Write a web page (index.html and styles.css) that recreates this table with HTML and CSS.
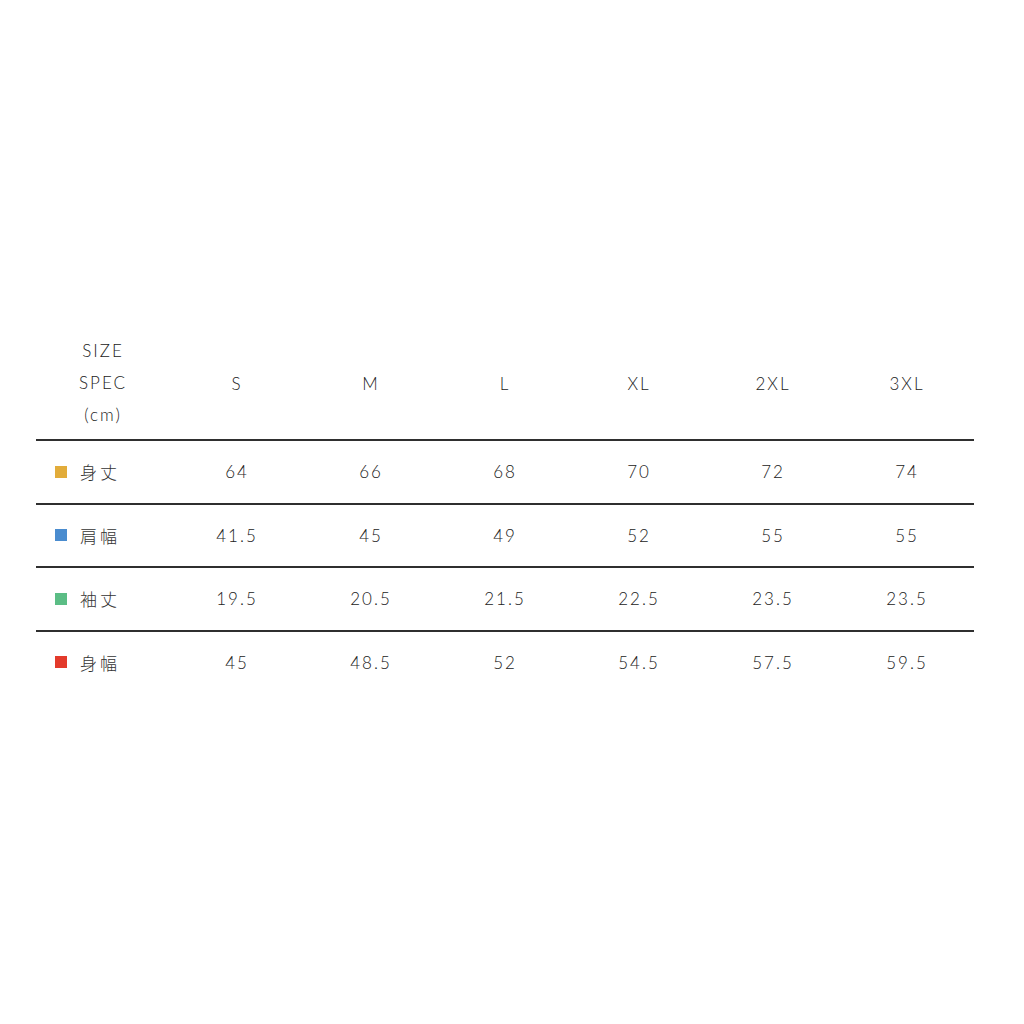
FILE: index.html
```html
<!DOCTYPE html>
<html lang="ja">
<head>
<meta charset="utf-8">
<link rel="stylesheet" href="styles.css">
</head>
<body>
<div class="chart">
  <div class="row head">
    <div class="cell label-head">SIZE<br>SPEC<br>(cm)</div>
    <div class="cell">S</div>
    <div class="cell">M</div>
    <div class="cell">L</div>
    <div class="cell">XL</div>
    <div class="cell">2XL</div>
    <div class="cell">3XL</div>
  </div>
  <div class="row">
    <div class="cell label"><span class="sw sw-yellow"></span>身丈</div>
    <div class="cell">64</div><div class="cell">66</div><div class="cell">68</div><div class="cell">70</div><div class="cell">72</div><div class="cell">74</div>
  </div>
  <div class="row">
    <div class="cell label"><span class="sw sw-blue"></span>肩幅</div>
    <div class="cell">41.5</div><div class="cell">45</div><div class="cell">49</div><div class="cell">52</div><div class="cell">55</div><div class="cell">55</div>
  </div>
  <div class="row">
    <div class="cell label"><span class="sw sw-green"></span>袖丈</div>
    <div class="cell">19.5</div><div class="cell">20.5</div><div class="cell">21.5</div><div class="cell">22.5</div><div class="cell">23.5</div><div class="cell">23.5</div>
  </div>
  <div class="row last">
    <div class="cell label"><span class="sw sw-red"></span>身幅</div>
    <div class="cell">45</div><div class="cell">48.5</div><div class="cell">52</div><div class="cell">54.5</div><div class="cell">57.5</div><div class="cell">59.5</div>
  </div>
</div>
</body>
</html>
```
FILE: styles.css
```css
html, body {
  margin: 0;
  padding: 0;
  background: #ffffff;
}
body {
  padding-top: 335px;
  font-family: Lato, "Noto Sans CJK JP", sans-serif;
  font-weight: 300;
  color: #222222;
  font-size: 17px;
  letter-spacing: 2px;
}
.chart {
  margin-left: 36px;
  width: 938px;
}
.row {
  display: grid;
  grid-template-columns: repeat(7, 134px);
  height: 61.5px;
  border-bottom: 2px solid #2f2f2f;
  align-items: center;
}
.row.head {
  height: 94px;
  padding-bottom: 10px;
}
.row.last {
  border-bottom: none;
}
.cell {
  text-align: center;
}
.label-head {
  line-height: 32px;
}
.label {
  text-align: left;
  padding-left: 19px;
  display: flex;
  align-items: center;
  font-family: "Noto Sans CJK JP", sans-serif;
  font-weight: 300;
  color: #333333;
  letter-spacing: 3px;
}
.sw {
  width: 12px;
  height: 12px;
  margin-right: 13px;
  display: inline-block;
}
.sw-yellow { background: #e2ac3a; }
.sw-blue { background: #4a8ccf; }
.sw-green { background: #5bbd85; }
.sw-red { background: #e33a2b; }
```
